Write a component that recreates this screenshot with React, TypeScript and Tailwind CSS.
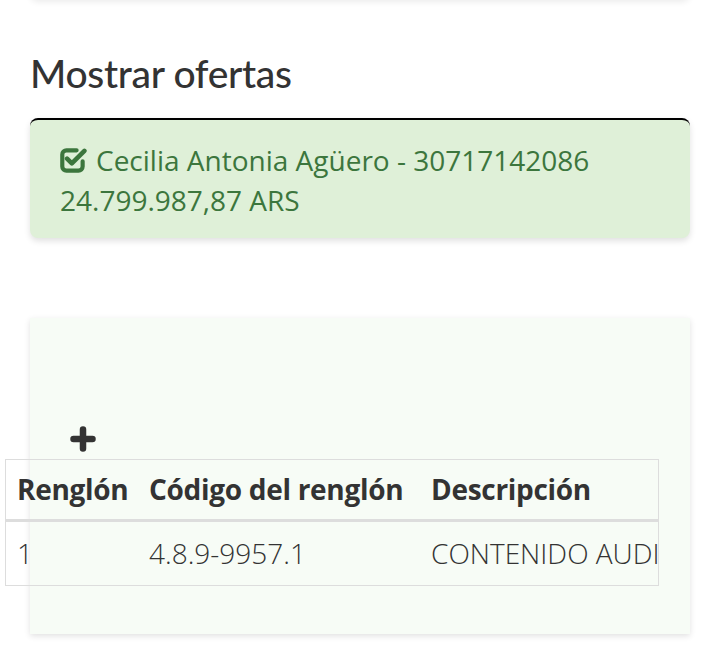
function CheckSquareIcon() {
  return (
    <svg viewBox="0 0 26 24" className="w-[27px] h-[25px] shrink-0" fill="none" stroke="currentColor" strokeLinejoin="round">
      <path d="M16 2.2H6.2a4 4 0 0 0-4 4v11.6a4 4 0 0 0 4 4h11.6a4 4 0 0 0 4-4v-5" strokeWidth="4" strokeLinecap="round" />
      <path d="M6.8 10.2l4.6 4.6L23.5 2.7" strokeWidth="4.4" strokeLinecap="round" />
    </svg>
  );
}

function PlusIcon() {
  return (
    <svg viewBox="0 0 26 26" className="block w-[26px] h-[26px]" fill="none" stroke="currentColor" strokeWidth="6.5" strokeLinecap="round">
      <path d="M13 3.5v19M3.5 13h19" />
    </svg>
  );
}

const rows = [{ renglon: '1', codigo: '4.8.9-9957.1', descripcion: 'CONTENIDO AUDIOVISUAL' }];

export default function App() {
  return (
    <div className="min-h-[646px] bg-white px-[30px] overflow-hidden" style={{ fontFamily: '"Open Sans", sans-serif' }}>
      {/* previous card, only its bottom edge shows */}
      <div className="-mt-[20px] h-[20px] bg-white rounded-b-lg shadow-[0_2px_6px_rgba(0,0,0,0.08)]" />

      <h2 className="mt-[51px] text-[39px] leading-[44px] font-medium text-[#333] tracking-[-0.3px]" style={{ fontFamily: 'Lato, "Open Sans", sans-serif' }}>
        Mostrar ofertas
      </h2>

      <div className="mt-[23px] h-[120px] rounded-lg border-t-2 border-black bg-[#dff0d8] text-[#3c763d] px-[30px] pt-[20px] shadow-[0_3px_6px_rgba(0,0,0,0.12)] text-[28px] leading-[40px]">
        <div className="flex items-center gap-[9px]">
          <CheckSquareIcon />
          <span>Cecilia Antonia Agüero - 30717142086</span>
        </div>
        <div>24.799.987,87 ARS</div>
      </div>

      <div className="mt-[80px] bg-[#f7fcf6] shadow-[0_2px_6px_rgba(0,0,0,0.12)] px-[40px] pt-[108px] pb-[48px]">
        <div className="text-[#333]">
          <PlusIcon />
        </div>
        <div className="mt-[7px] -ml-[65px] w-[654px] overflow-hidden border border-[#ddd] text-[#333] text-[28px]">
          <table className="w-max border-collapse whitespace-nowrap">
            <thead>
              <tr className="border-b-[3px] border-[#ddd]">
                <th className="w-[132px] h-[60px] pl-[11px] text-left font-bold tracking-[-0.3px]">Renglón</th>
                <th className="w-[282px] pl-[11px] text-left font-bold tracking-[-0.3px]">Código del renglón</th>
                <th className="pl-[11px] text-left font-bold tracking-[-0.3px]">Descripción</th>
              </tr>
            </thead>
            <tbody>
              {rows.map((r) => (
                <tr key={r.codigo}>
                  <td className="h-[65px] pl-[11px] font-light">{r.renglon}</td>
                  <td className="pl-[11px] font-light">{r.codigo}</td>
                  <td className="pl-[11px] font-light">{r.descripcion}</td>
                </tr>
              ))}
            </tbody>
          </table>
        </div>
      </div>
    </div>
  );
}
